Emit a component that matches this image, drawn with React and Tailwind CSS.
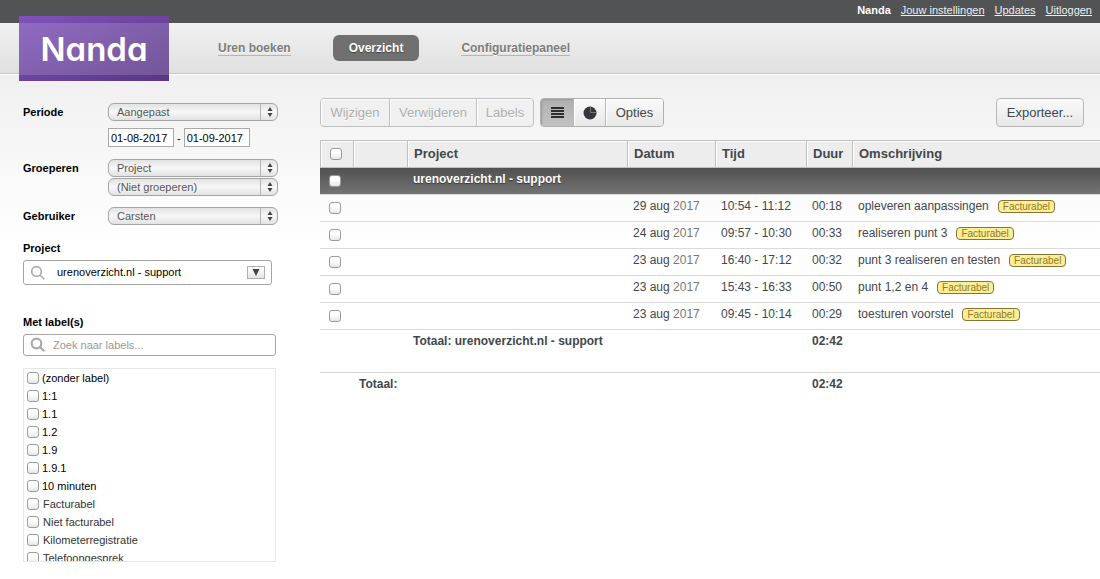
import { useState } from 'react';

const entries = [
  { id: 1, day: '29 aug', year: '2017', time: '10:54 - 11:12', duration: '00:18', text: 'opleveren aanpassingen' },
  { id: 2, day: '24 aug', year: '2017', time: '09:57 - 10:30', duration: '00:33', text: 'realiseren punt 3' },
  { id: 3, day: '23 aug', year: '2017', time: '16:40 - 17:12', duration: '00:32', text: 'punt 3 realiseren en testen' },
  { id: 4, day: '23 aug', year: '2017', time: '15:43 - 16:33', duration: '00:50', text: 'punt 1,2 en 4' },
  { id: 5, day: '23 aug', year: '2017', time: '09:45 - 10:14', duration: '00:29', text: 'toesturen voorstel' },
];

const labels = [
  { name: '(zonder label)' },
  { name: '1:1' },
  { name: '1.1' },
  { name: '1.2' },
  { name: '1.9' },
  { name: '1.9.1' },
  { name: '10 minuten' },
  { name: 'Facturabel', system: true },
  { name: 'Niet facturabel', system: true },
  { name: 'Kilometerregistratie', system: true },
  { name: 'Telefoongesprek', system: true },
];

function Checkbox(props) {
  return (
    <input
      type="checkbox"
      className="block w-3 h-3 shrink-0 appearance-none rounded-[3px] border border-[#9a9a9a] bg-linear-to-b from-white from-40% to-[#e6e6e6] checked:bg-[#8a8a8a]"
      {...props}
    />
  );
}

function Select({ id, label, options }) {
  return (
    <div className="relative">
      <select
        id={id}
        aria-label={label}
        className="block w-full h-[18px] pl-2 pr-5 appearance-none rounded-md border border-[#a5a5a5] bg-linear-to-b from-[#e2e2e2] via-[#f8f8f8] to-[#e2e2e2] text-[11px] leading-4 text-[#555]"
      >
        {options.map((option) => (
          <option key={option}>{option}</option>
        ))}
      </select>
      <span className="absolute right-0 inset-y-px w-[18px] flex items-center justify-center border-l border-[#b5b5b5] pointer-events-none">
        <svg width="6" height="10" viewBox="0 0 6 10" fill="#444">
          <path d="M3 0l2.5 4h-5zM3 10L.5 6h5z" />
        </svg>
      </span>
    </div>
  );
}

function SearchIcon({ strokeWidth }) {
  return (
    <svg
      width="16"
      height="16"
      viewBox="0 0 16 16"
      fill="none"
      stroke="#aaa"
      strokeWidth={strokeWidth}
      className="shrink-0"
    >
      <circle cx="6.5" cy="6.5" r="4.8" />
      <path d="M10 10l4.3 4.3" />
    </svg>
  );
}

function Tag({ children }) {
  return (
    <span className="inline-block ml-[9px] h-[13px] px-1 rounded border border-[#857435] bg-[#fcee96] text-[10px] leading-[11px] text-[#8d7a2c]">
      {children}
    </span>
  );
}

function Sidebar() {
  const [from, setFrom] = useState('01-08-2017');
  const [to, setTo] = useState('01-09-2017');
  const [project, setProject] = useState('urenoverzicht.nl - support');
  const [query, setQuery] = useState('');

  return (
    <aside className="w-80 shrink-0 pl-[23px] pr-11 pt-7 text-[11px] leading-[18px] text-black">
      <div className="grid grid-cols-[85px_170px] text-[11px]">
        <label htmlFor="period" className="font-bold">Periode</label>
        <Select id="period" options={['Aangepast', 'Deze maand', 'Vorige maand']} />
        <div className="col-start-2 mt-[7px] flex items-center gap-[3px]">
          <input
            aria-label="Van"
            value={from}
            onChange={(e) => setFrom(e.target.value)}
            className="w-[66px] h-[19px] px-0.5 border border-[#a9a9a9] bg-white"
          />
          <span>-</span>
          <input
            aria-label="Tot"
            value={to}
            onChange={(e) => setTo(e.target.value)}
            className="w-[66px] h-[19px] px-0.5 border border-[#a9a9a9] bg-white"
          />
        </div>
        <label htmlFor="group" className="mt-3 font-bold">Groeperen</label>
        <div className="mt-3 flex flex-col gap-px">
          <Select id="group" options={['Project', 'Gebruiker', 'Datum']} />
          <Select label="Tweede groepering" options={['(Niet groeperen)', 'Project', 'Gebruiker']} />
        </div>
        <label htmlFor="user" className="mt-[11px] font-bold">Gebruiker</label>
        <div className="mt-[11px]">
          <Select id="user" options={['Carsten']} />
        </div>
      </div>

      <label htmlFor="project" className="block mt-[14px] font-bold">Project</label>
      <div className="mt-[3px] w-[249px] h-[25px] pl-1.5 pr-1.5 flex items-center rounded-[3px] border border-[#a5a5a5] bg-white">
        <SearchIcon strokeWidth="1.6" />
        <input
          id="project"
          value={project}
          onChange={(e) => setProject(e.target.value)}
          className="ml-[11px] h-5 pb-0.5 flex-1 min-w-0 focus:outline-none"
        />
        <button
          aria-label="Toon projecten"
          className="w-[18px] h-[13px] flex items-center justify-center border border-[#b0b0b0] bg-linear-to-b from-white to-[#e4e4e4]"
        >
          <svg width="8" height="7" viewBox="0 0 8 7" fill="#444">
            <path d="M.5 0h7L4 7z" />
          </svg>
        </button>
      </div>

      <label htmlFor="labels" className="block mt-7 font-bold">Met label(s)</label>
      <div className="mt-[3px] h-[22px] pl-1.5 flex items-center rounded-[3px] border border-[#a5a5a5] bg-white">
        <SearchIcon strokeWidth="2.2" />
        <input
          id="labels"
          value={query}
          onChange={(e) => setQuery(e.target.value)}
          placeholder="Zoek naar labels..."
          className="ml-[7px] flex-1 min-w-0 placeholder:text-[#999] focus:outline-none"
        />
      </div>

      <ul className="mt-3 h-[194px] overflow-hidden border border-[#e6e6e6] bg-white">
        {labels.map((label) => (
          <li key={label.name}>
            <label className={label.system ? 'h-[18px] pl-[3px] flex items-center gap-1 text-[#333]' : 'h-[18px] pl-[3px] flex items-center gap-[3px]'}>
              <Checkbox />
              {label.name}
            </label>
          </li>
        ))}
      </ul>
    </aside>
  );
}

function Toolbar({ view, setView }) {
  const button = 'h-[27px] border-l border-[#b8b8b8] first:border-l-0 bg-linear-to-b from-[#fafafa] to-[#e8e8e8] shadow-[inset_1px_1px_0_#fff]';
  const active = 'h-[27px] border-l border-[#b8b8b8] first:border-l-0 bg-linear-to-b from-[#b0b0b0] to-[#c2c2c2] shadow-[inset_1px_1px_2px_#999]';
  const disabled = 'h-[27px] border-l border-[#c0c0c0] first:border-l-0 text-[#acacac] shadow-[inset_1px_1px_0_#fff] [text-shadow:0_1px_0_#fff]';

  return (
    <div className="flex pr-4 text-[13px] text-[#43474c]">
      <div className="flex overflow-hidden rounded border border-[#c0c0c0] bg-[#f0f0f0]">
        <button disabled className={`${disabled} w-[68px]`}>Wijzigen</button>
        <button disabled className={`${disabled} w-[87px]`}>Verwijderen</button>
        <button disabled className={`${disabled} w-[57px]`}>Labels</button>
      </div>
      <div className="ml-1.5 flex overflow-hidden rounded border border-[#b0b0b0]">
        <button
          aria-label="Lijst"
          onClick={() => setView('list')}
          className={`${view === 'list' ? active : button} w-8 flex items-center justify-center`}
        >
          <svg width="13" height="11" viewBox="0 0 13 11" fill="#2b2d30" shapeRendering="crispEdges">
            <path d="M0 0h13v2H0zM0 3h13v2H0zM0 6h13v2H0zM0 9h13v2H0z" />
          </svg>
        </button>
        <button
          aria-label="Grafiek"
          onClick={() => setView('chart')}
          className={`${view === 'chart' ? active : button} w-8 flex items-center justify-center`}
        >
          <svg width="14" height="14" viewBox="0 0 14 14">
            <circle cx="7" cy="7" r="6.5" fill="#34373c" />
            <path d="M7.5 .5v6h6" fill="none" stroke="#777" />
          </svg>
        </button>
        <button className={`${button} w-[58px]`}>Opties</button>
      </div>
      <button className="ml-auto w-[88px] h-[29px] rounded border border-[#b8b8b8] bg-linear-to-b from-[#fafafa] to-[#e8e8e8]">
        Exporteer...
      </button>
    </div>
  );
}

function HoursTable() {
  const th = 'h-7 pl-1.5 border-y border-l border-[#c0c0c0] text-left font-bold shadow-[inset_1px_1px_0_#fff]';
  const td = 'h-[27px] pt-1 pl-1.5 align-top border-b border-[#dadada] whitespace-nowrap';
  const tdCheck = 'h-[27px] pl-[9px] border-b border-[#dadada]';

  return (
    <table className="mt-[13px] w-full table-fixed border-separate border-spacing-0 text-xs leading-[14px] text-[#43474c]">
      <colgroup>
        <col className="w-[33px]" />
        <col className="w-[54px]" />
        <col className="w-[220px]" />
        <col className="w-[88px]" />
        <col className="w-[91px]" />
        <col className="w-[46px]" />
        <col />
      </colgroup>
      <thead>
        <tr className="bg-[#ededed] text-[13px]">
          <th className="h-7 pl-[9px] border-y border-l border-[#c0c0c0] shadow-[inset_1px_1px_0_#fff]">
            <Checkbox aria-label="Alles selecteren" />
          </th>
          <th className={th} />
          <th className={th}>Project</th>
          <th className={th}>Datum</th>
          <th className={th}>Tijd</th>
          <th className={th}>Duur</th>
          <th className={th}>Omschrijving</th>
        </tr>
      </thead>
      <tbody>
        <tr className="bg-linear-to-b from-[#515151] to-[#757575] text-white font-bold">
          <td className={tdCheck}>
            <Checkbox aria-label="urenoverzicht.nl - support selecteren" />
          </td>
          <td className={td} />
          <td className={`${td} [text-shadow:0_1px_1px_#333]`} colSpan={5}>urenoverzicht.nl - support</td>
        </tr>
        {entries.map((entry) => (
          <tr key={entry.id}>
            <td className={tdCheck}>
              <Checkbox aria-label={`${entry.text} selecteren`} />
            </td>
            <td className={td} />
            <td className={td} />
            <td className={td}>
              {entry.day} <span className="text-[#777]">{entry.year}</span>
            </td>
            <td className={td}>{entry.time}</td>
            <td className={td}>{entry.duration}</td>
            <td className={td}>
              {entry.text}
              <Tag>Facturabel</Tag>
            </td>
          </tr>
        ))}
        <tr className="font-bold">
          <td className="h-[43px] border-b border-[#dadada]" />
          <td className={td} />
          <td className={td} colSpan={3}>Totaal: urenoverzicht.nl - support</td>
          <td className={td}>02:42</td>
          <td className={td} />
        </tr>
        <tr className="font-bold">
          <td />
          <td className="pt-1 pl-1.5" colSpan={4}>Totaal:</td>
          <td className="pt-1 pl-1.5">02:42</td>
          <td />
        </tr>
      </tbody>
    </table>
  );
}

export default function App() {
  const [view, setView] = useState('list');

  return (
    <div className="min-h-screen bg-white font-['Liberation_Sans',Arial,sans-serif]">
      <div className="h-[23px] pr-2 flex items-start justify-end gap-2.5 bg-[#525355] text-[11px] leading-5 text-[#eee]">
        <span className="font-bold text-white">Nanda</span>
        <a href="#instellingen" className="underline">Jouw instellingen</a>
        <a href="#updates" className="underline">Updates</a>
        <a href="#uitloggen" className="underline">Uitloggen</a>
      </div>

      <header className="h-[51px] pl-[19px] flex items-center bg-linear-to-b from-[#f1f1f1] to-[#e0e0e0] border-b border-[#c8c8c8] text-xs font-bold text-[#7b7b7b]">
        <a
          href="#home"
          className="relative self-start -mt-[7px] w-[150px] h-[65px] pt-[7px] pb-[6px] bg-linear-to-br from-[#8052bb] to-[#593784]"
        >
          <span className="h-full flex items-center justify-center bg-white/15 font-[Inter,sans-serif] text-[33px] font-semibold text-white [font-feature-settings:'cv11']">
            Nanda
          </span>
        </a>
        <nav className="ml-[49px] flex items-center gap-[42px] [text-shadow:0_1px_0_#fff]">
          <a href="#uren" className="leading-[14px] border-b border-[#b5b5b5]">Uren boeken</a>
          <a
            href="#overzicht"
            aria-current="page"
            className="h-[26px] px-4 rounded-md bg-[#6f706f] leading-[26px] text-white [text-shadow:0_1px_1px_#444]"
          >
            Overzicht
          </a>
          <a href="#configuratie" className="leading-[14px] border-b border-[#b5b5b5]">Configuratiepaneel</a>
        </nav>
      </header>

      <div className="flex items-start border-t border-white bg-[linear-gradient(#f0f0f0,#fff_170px)]">
        <Sidebar />
        <main className="flex-1 min-w-0 pt-[23px]">
          <Toolbar view={view} setView={setView} />
          <HoursTable />
        </main>
      </div>
    </div>
  );
}
